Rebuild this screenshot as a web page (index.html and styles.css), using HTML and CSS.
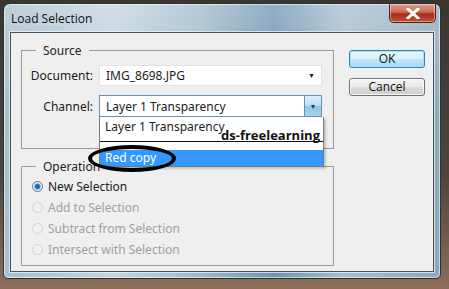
FILE: index.html
```html
<!DOCTYPE html>
<html lang="en">
<head>
    <meta charset="UTF-8">
    <title>Load Selection</title>
    <link rel="stylesheet" href="styles.css">
</head>
<body>
    <div class="window">
        <div class="titlebar">
            <span class="title">Load Selection</span>
            <button class="close-btn">
                <svg width="14" height="11" viewBox="0 0 14 11">
                    <path d="M2 1 L12 10 M12 1 L2 10" stroke="#fff" stroke-width="3" stroke-linecap="square"/>
                </svg>
            </button>
        </div>

        <div class="client">
            <div class="main">
                <fieldset class="group source">
                    <legend>Source</legend>
                    <div class="row">
                        <label>Document:</label>
                        <div class="select">
                            <span>IMG_8698.JPG</span>
                            <span class="arrow">&#9660;</span>
                        </div>
                    </div>
                    <div class="row">
                        <label>Channel:</label>
                        <div class="select open">
                            <span>Layer 1 Transparency</span>
                            <span class="arrow-btn">&#9660;</span>

                            <div class="dropdown">
                                <div class="item">Layer 1 Transparency</div>
                                <div class="watermark">ds-freelearning</div>
                                <div class="item selected">Red copy</div>
                            </div>
                            <div class="circle-mark"></div>
                        </div>
                    </div>
                </fieldset>

                <fieldset class="group operation">
                    <legend>Operation</legend>
                    <div class="radio checked"><span class="dot"></span>New Selection</div>
                    <div class="radio disabled"><span class="dot"></span>Add to Selection</div>
                    <div class="radio disabled"><span class="dot"></span>Subtract from Selection</div>
                    <div class="radio disabled"><span class="dot"></span>Intersect with Selection</div>
                </fieldset>
            </div>

            <div class="buttons">
                <button class="btn default">OK</button>
                <button class="btn">Cancel</button>
            </div>
        </div>
    </div>
</body>
</html>
```

FILE: styles.css
```css
body {
    margin: 0;
    width: 449px;
    height: 289px;
    overflow: hidden;
    font-family: 'Noto Sans', 'Open Sans', sans-serif;
    font-size: 12px;
    color: #1c1c1c;
    background: linear-gradient(to bottom, #3b3531 0%, #4e443d 60%, #8c6e58 100%);
}

.window {
    margin: 3px 0 0 3px;
    width: 438px;
    height: 276px;
    box-sizing: border-box;
    border: 1px solid #26343d;
    border-radius: 7px 7px 5px 5px;
    background:
        linear-gradient(to bottom, rgba(255,255,255,0.25), rgba(255,255,255,0) 40%),
        linear-gradient(to right, #a8bfcc 0%, #c3d4de 25%, #9fbacb 45%, #6e95b0 62%, #a7bfcd 78%, #8fa9b8 100%);
    box-shadow: inset 0 0 0 1px rgba(255,255,255,0.55);
    display: flex;
    flex-direction: column;
}

.titlebar {
    height: 28px;
    display: flex;
    align-items: flex-start;
    justify-content: space-between;
}

.title {
    font-family: 'Open Sans', sans-serif;
    font-size: 12px;
    color: #111;
    padding: 6px 0 0 7px;
}

.close-btn {
    width: 47px;
    height: 19px;
    margin-right: 4px;
    border: 1px solid #4a2520;
    border-top: none;
    border-radius: 0 0 5px 5px;
    background: linear-gradient(to bottom, #e0a091 0%, #cc6a57 45%, #a82e1c 55%, #be5238 100%);
    box-shadow: inset 0 0 0 1px rgba(255,255,255,0.4);
    display: flex;
    align-items: center;
    justify-content: center;
    padding: 0;
}

.client {
    flex: 1;
    margin: 0 6px 6px 6px;
    border: 1px solid #3e5566;
    background: #efefef;
    display: flex;
    box-shadow: 0 0 0 1px rgba(255,255,255,0.6);
}

.main {
    width: 313px;
    margin: 9px 0 0 10px;
    display: flex;
    flex-direction: column;
}

.group {
    box-sizing: border-box;
    margin: 0;
    border: 1px solid #9a9a9a;
    padding: 0;
}

.group legend {
    margin-left: 14px;
    padding: 0 7px;
    font-size: 12px;
    color: #222;
}

.source {
    height: 107px;
    padding-top: 6px;
}

.row {
    display: flex;
    align-items: center;
    margin-bottom: 9px;
}

.row label {
    width: 71px;
    text-align: right;
    padding-right: 6px;
}

.select {
    position: relative;
    width: 223px;
    height: 21px;
    box-sizing: border-box;
    background: #fff;
    border: 1px solid #e3e3e3;
    display: flex;
    align-items: center;
    justify-content: space-between;
    padding-left: 6px;
}

.select .arrow {
    font-size: 7px;
    margin-right: 6px;
    color: #222;
}

.select.open {
    border: 1px solid #6b8fae;
    height: 22px;
}

.arrow-btn {
    align-self: stretch;
    width: 16px;
    border-left: 1px solid #6b8fae;
    background: linear-gradient(to bottom, #e0f1fb, #b6dcf3 50%, #8ec6e8 51%, #a6d4ef);
    font-size: 7px;
    color: #1e3c55;
    display: flex;
    align-items: center;
    justify-content: center;
}

.dropdown {
    position: absolute;
    left: -1px;
    top: 21px;
    width: 223px;
    background: #fff;
    border: 1px solid #7a7a7a;
    border-top: none;
    box-shadow: 2px 2px 2px rgba(0,0,0,0.2);
    z-index: 2;
}

.dropdown .item {
    height: 20px;
    line-height: 20px;
    padding-left: 5px;
}

.dropdown .watermark {
    height: 12px;
    line-height: 12px;
    margin-top: -8px;
    text-align: right;
    padding-right: 3px;
    font-family: 'Open Sans', sans-serif;
    font-weight: bold;
    font-size: 13px;
    color: #111;
    border-bottom: 1px solid #111;
    position: relative;
}

.dropdown .selected {
    margin-top: 8px;
    background: #3399ff;
    color: #fff;
    height: 16px;
    line-height: 16px;
}

.circle-mark {
    position: absolute;
    left: -12px;
    top: 49px;
    width: 80px;
    height: 19px;
    border: 4px solid #000;
    border-radius: 50%;
    z-index: 3;
}

.operation {
    margin-top: 9px;
    height: 108px;
    padding-top: 1px;
}

.radio {
    display: flex;
    align-items: center;
    height: 21px;
    padding-left: 10px;
    color: #222;
}

.radio .dot {
    width: 11px;
    height: 11px;
    border-radius: 50%;
    border: 1px solid #9aa3ab;
    background: radial-gradient(circle, #f4f4f4, #dcdcdc);
    margin-right: 5px;
    box-sizing: border-box;
}

.radio.checked .dot {
    background: radial-gradient(circle, #1a5f8c 0, #2f85bd 2.5px, #e6eef4 3.5px, #d6dfe6 100%);
    border-color: #5b7c95;
}

.radio.disabled {
    color: #a0a0a0;
}

.radio.disabled .dot {
    border-color: #cfd2d4;
    background: #f0f0f0;
}

.buttons {
    margin: 17px 0 0 15px;
    display: flex;
    flex-direction: column;
    gap: 10px;
}

.btn {
    width: 76px;
    height: 18px;
    padding: 0;
    font-family: 'Open Sans', sans-serif;
    font-size: 12px;
    line-height: 14px;
    color: #111;
    border: 1px solid #707070;
    border-radius: 3px;
    background: linear-gradient(to bottom, #f5f5f5 0%, #e9e9e9 50%, #dadada 51%, #cfcfcf 100%);
    box-shadow: inset 0 0 0 1px rgba(255,255,255,0.8);
}

.btn.default {
    border-color: #3c7fb1;
    background: linear-gradient(to bottom, #eaf6fd 0%, #d9f0fc 50%, #bee6fd 51%, #a7d9f5 100%);
    box-shadow: inset 0 0 0 1px #9ee4f7;
}
```
